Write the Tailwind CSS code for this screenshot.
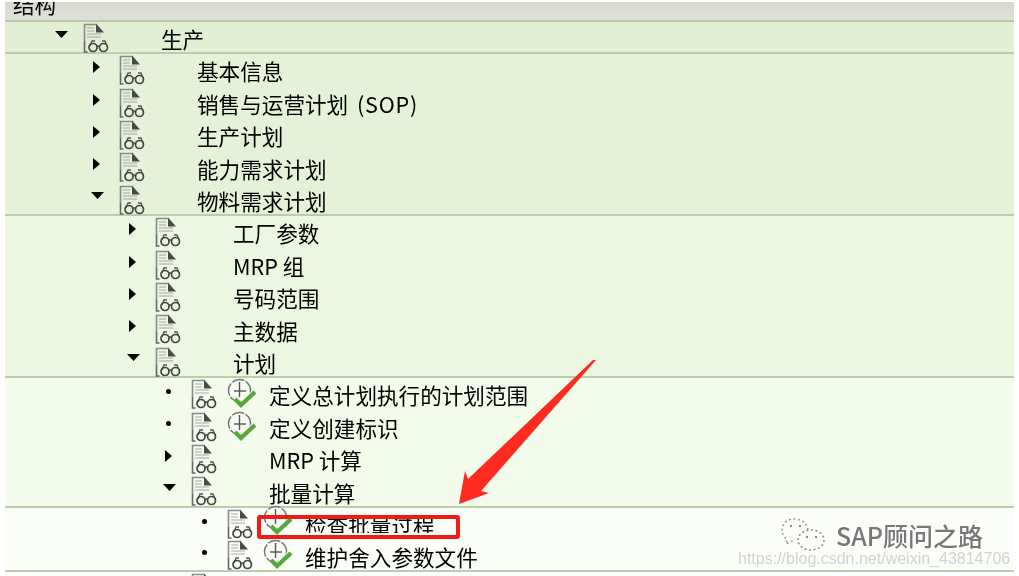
<!doctype html>
<html lang="en">
    <head>
        <meta charset="UTF-8" />
        <title>结构</title>
        <script src="https://cdn.jsdelivr.net/npm/@tailwindcss/browser@4"></script>
    </head>
    <body class="bg-white">
        <svg width="0" height="0" class="absolute">
            <symbol id="doc" viewBox="0 0 26 30">
                <path d="M1.500 18V1.500h12" fill="none" stroke="#8a8a8a" stroke-width="1.6" />
                <path d="M13 0.500l8 9h-8z" fill="#4a4a4a" />
                <path d="M4 5h7M4 8h7M4 11h14M4 14h14" stroke="#a8a8a8" stroke-width="1.2" />
                <path d="M1.500 18v11h3" fill="none" stroke="#666" stroke-width="1.6" />
                <path d="M7 23l2-5h3M24 23l-2-5h-3" fill="none" stroke="#555" stroke-width="1.3" />
                <circle cx="10" cy="24.500" r="4" fill="none" stroke="#444" stroke-width="1.7" />
                <circle cx="20.500" cy="24.500" r="4" fill="none" stroke="#444" stroke-width="1.7" />
                <path d="M14 23h2.500" stroke="#444" stroke-width="1.4" />
            </symbol>
            <symbol id="clock" viewBox="0 0 32 32">
                <circle cx="12.500" cy="12.500" r="11" fill="#fff" fill-opacity=".4" stroke="#777" stroke-width="1.5" stroke-dasharray="13 1.500" />
                <path d="M12.500 4v15" stroke="#555" stroke-width="1.4" />
                <path d="M7 13h12" stroke="#555" stroke-width="1.4" />
                <path d="M8 21l6 6 14-13" fill="none" stroke="#ffffff" stroke-opacity=".7" stroke-width="6.500" />
                <path d="M8 21l6 6 14-13" fill="none" stroke="#55a938" stroke-width="4.200" />
            </symbol>
            <symbol id="right" viewBox="0 0 7 12"><path d="M0 0l7 6-7 6z" fill="#000" /></symbol>
            <symbol id="down" viewBox="0 0 13 7"><path d="M0 0h13L6.500 7z" fill="#000" /></symbol>
        </svg>

        <div class="relative w-[1019px] h-[576px] overflow-hidden">
            <div class="mx-[5px] mt-[2px] w-[1009px] text-[21.600px] leading-none text-black blur-[0.45px]" style="font-family: 'Noto Sans CJK SC', 'Noto Sans', sans-serif">
                <div class="h-[20px] overflow-hidden bg-gradient-to-b from-[#d6d7cd] to-[#e0e1da] border-b-2 border-[#b7c7a8] pl-[8px]">
                    <div class="-mt-[9px]">结构</div>
                </div>

                <div class="h-[32px] bg-[#e2efd2] border-b-2 border-[#bccdab] pl-[48px]">
                    <div class="flex items-center h-[32px]">
                        <span class="w-[30px]"><svg class="w-[13px] h-[7px] ml-[2px] -translate-y-[4px]"><use href="#down" /></svg></span>
                        <svg class="w-[26px] h-[30px]"><use href="#doc" /></svg>
                        <span class="w-[52px]"></span><span class="translate-y-[1px]">生产</span>
                    </div>
                </div>

                <div class="h-[162px] bg-[#e5f2d7] border-b-2 border-[#bccdab] pl-[84px]">
                    <div class="flex items-center h-[32.400px]">
                        <span class="w-[30px]"><svg class="w-[7px] h-[12px] ml-[4px] -translate-y-[3px]"><use href="#right" /></svg></span>
                        <svg class="w-[26px] h-[30px]"><use href="#doc" /></svg>
                        <span class="w-[52px]"></span><span class="translate-y-[1px]">基本信息</span>
                    </div>
                    <div class="flex items-center h-[32.400px]">
                        <span class="w-[30px]"><svg class="w-[7px] h-[12px] ml-[4px] -translate-y-[3px]"><use href="#right" /></svg></span>
                        <svg class="w-[26px] h-[30px]"><use href="#doc" /></svg>
                        <span class="w-[52px]"></span><span class="translate-y-[1px]">销售与运营计划 <span class="ml-[4px] tracking-[0.800px]">(SOP)</span></span>
                    </div>
                    <div class="flex items-center h-[32.400px]">
                        <span class="w-[30px]"><svg class="w-[7px] h-[12px] ml-[4px] -translate-y-[3px]"><use href="#right" /></svg></span>
                        <svg class="w-[26px] h-[30px]"><use href="#doc" /></svg>
                        <span class="w-[52px]"></span><span class="translate-y-[1px]">生产计划</span>
                    </div>
                    <div class="flex items-center h-[32.400px]">
                        <span class="w-[30px]"><svg class="w-[7px] h-[12px] ml-[4px] -translate-y-[3px]"><use href="#right" /></svg></span>
                        <svg class="w-[26px] h-[30px]"><use href="#doc" /></svg>
                        <span class="w-[52px]"></span><span class="translate-y-[1px]">能力需求计划</span>
                    </div>
                    <div class="flex items-center h-[32.400px]">
                        <span class="w-[30px]"><svg class="w-[13px] h-[7px] ml-[2px] -translate-y-[4px]"><use href="#down" /></svg></span>
                        <svg class="w-[26px] h-[30px]"><use href="#doc" /></svg>
                        <span class="w-[52px]"></span><span class="translate-y-[1px]">物料需求计划</span>
                    </div>
                </div>

                <div class="h-[162px] bg-[#ecf7e1] border-b-2 border-[#bccdab] pl-[120px]">
                    <div class="flex items-center h-[32.400px]">
                        <span class="w-[30px]"><svg class="w-[7px] h-[12px] ml-[4px] -translate-y-[3px]"><use href="#right" /></svg></span>
                        <svg class="w-[26px] h-[30px]"><use href="#doc" /></svg>
                        <span class="w-[52px]"></span><span class="translate-y-[1px]">工厂参数</span>
                    </div>
                    <div class="flex items-center h-[32.400px]">
                        <span class="w-[30px]"><svg class="w-[7px] h-[12px] ml-[4px] -translate-y-[3px]"><use href="#right" /></svg></span>
                        <svg class="w-[26px] h-[30px]"><use href="#doc" /></svg>
                        <span class="w-[52px]"></span><span class="translate-y-[1px]">MRP 组</span>
                    </div>
                    <div class="flex items-center h-[32.400px]">
                        <span class="w-[30px]"><svg class="w-[7px] h-[12px] ml-[4px] -translate-y-[3px]"><use href="#right" /></svg></span>
                        <svg class="w-[26px] h-[30px]"><use href="#doc" /></svg>
                        <span class="w-[52px]"></span><span class="translate-y-[1px]">号码范围</span>
                    </div>
                    <div class="flex items-center h-[32.400px]">
                        <span class="w-[30px]"><svg class="w-[7px] h-[12px] ml-[4px] -translate-y-[3px]"><use href="#right" /></svg></span>
                        <svg class="w-[26px] h-[30px]"><use href="#doc" /></svg>
                        <span class="w-[52px]"></span><span class="translate-y-[1px]">主数据</span>
                    </div>
                    <div class="flex items-center h-[32.400px]">
                        <span class="w-[30px]"><svg class="w-[13px] h-[7px] ml-[2px] -translate-y-[4px]"><use href="#down" /></svg></span>
                        <svg class="w-[26px] h-[30px]"><use href="#doc" /></svg>
                        <span class="w-[52px]"></span><span class="translate-y-[1px]">计划</span>
                    </div>
                </div>

                <div class="h-[130px] bg-[#f3fbeb] border-b-2 border-[#bccdab] pl-[156px]">
                    <div class="flex items-center h-[32.400px]">
                        <span class="w-[30px]"><span class="block w-[5px] h-[5px] ml-[5px] rounded-full bg-black -translate-y-[3px]"></span></span>
                        <svg class="w-[26px] h-[30px]"><use href="#doc" /></svg>
                        <span class="w-[52px]"><svg class="w-[32px] h-[32px] ml-[10px]"><use href="#clock" /></svg></span><span class="translate-y-[1px]">定义总计划执行的计划范围</span>
                    </div>
                    <div class="flex items-center h-[32.400px]">
                        <span class="w-[30px]"><span class="block w-[5px] h-[5px] ml-[5px] rounded-full bg-black -translate-y-[3px]"></span></span>
                        <svg class="w-[26px] h-[30px]"><use href="#doc" /></svg>
                        <span class="w-[52px]"><svg class="w-[32px] h-[32px] ml-[10px]"><use href="#clock" /></svg></span><span class="translate-y-[1px]">定义创建标识</span>
                    </div>
                    <div class="flex items-center h-[32.400px]">
                        <span class="w-[30px]"><svg class="w-[7px] h-[12px] ml-[4px] -translate-y-[3px]"><use href="#right" /></svg></span>
                        <svg class="w-[26px] h-[30px]"><use href="#doc" /></svg>
                        <span class="w-[52px]"></span><span class="translate-y-[1px]">MRP 计算</span>
                    </div>
                    <div class="flex items-center h-[32.400px]">
                        <span class="w-[30px]"><svg class="w-[13px] h-[7px] ml-[2px] -translate-y-[4px]"><use href="#down" /></svg></span>
                        <svg class="w-[26px] h-[30px]"><use href="#doc" /></svg>
                        <span class="w-[52px]"></span><span class="translate-y-[1px]">批量计算</span>
                    </div>
                </div>

                <div class="h-[64px] bg-[#fbfef8] border-b-2 border-[#bccdab] pl-[192px]">
                    <div class="flex items-center h-[32.400px]">
                        <span class="w-[30px]"><span class="block w-[5px] h-[5px] ml-[5px] rounded-full bg-black -translate-y-[3px]"></span></span>
                        <svg class="w-[26px] h-[30px]"><use href="#doc" /></svg>
                        <span class="w-[52px]"><svg class="w-[32px] h-[32px] ml-[10px] -translate-y-[3px]"><use href="#clock" /></svg></span><span class="translate-y-[1px]">检查批量过程</span>
                    </div>
                    <div class="flex items-center h-[30px]">
                        <span class="w-[30px]"><span class="block w-[5px] h-[5px] ml-[5px] rounded-full bg-black -translate-y-[3px]"></span></span>
                        <svg class="w-[26px] h-[30px]"><use href="#doc" /></svg>
                        <span class="w-[52px]"><svg class="w-[32px] h-[32px] ml-[10px]"><use href="#clock" /></svg></span><span class="translate-y-[1px]">维护舍入参数文件</span>
                    </div>
                </div>

                <div class="bg-white pl-[186px] pt-[1px]">
                    <svg class="w-[26px] h-[30px]"><use href="#doc" /></svg>
                </div>
            </div>

            <!-- red annotation over the tree -->
            <div class="absolute left-[300px] top-[533px] w-[150px] h-[3px] bg-white"></div>
            <div class="absolute left-[257px] top-[515px] w-[203px] h-[24px] rounded-[3px] border-[4px] border-[#f01c14]"></div>
            <svg class="absolute left-0 top-0" width="1019" height="576">
                <polygon points="596,360 593,360 468,479 465,471 459,504 489,493 481,491" fill="#ff2a20" />
            </svg>

            <!-- blog watermark -->
            <svg class="absolute left-[781px] top-[517px] w-[45px] h-[34px]" viewBox="0 0 45 34">
                <path d="M27 13C26 6 20 2 13 2 6 2 1 7 1 13c0 4 2 7 5 9l-1 5 6-3 3 .5" fill="none" stroke="#999" stroke-width="1.500" stroke-dasharray="2 2.500" />
                <ellipse cx="30" cy="23" rx="13" ry="10" fill="none" stroke="#888" stroke-width="1.500" stroke-dasharray="2 2.500" />
                <path d="M9 9h2M18 9h2M25 20h2M34 20h2" stroke="#666" stroke-width="1.600" />
            </svg>
            <div class="absolute left-[836px] top-[518px] text-[25px] font-medium leading-[34px] text-[#777] [text-shadow:1px_1px_0_#fff] blur-[0.4px]" style="font-family: 'Noto Sans CJK SC', sans-serif">SAP顾问之路</div>
            <div class="absolute left-[738px] top-[549px] text-[16px] leading-[20px] text-[#d2d2d2] blur-[0.3px]" style="font-family: 'Liberation Sans', sans-serif">https://blog.csdn.net/weixin_43814706</div>
        </div>
    </body>
</html>
